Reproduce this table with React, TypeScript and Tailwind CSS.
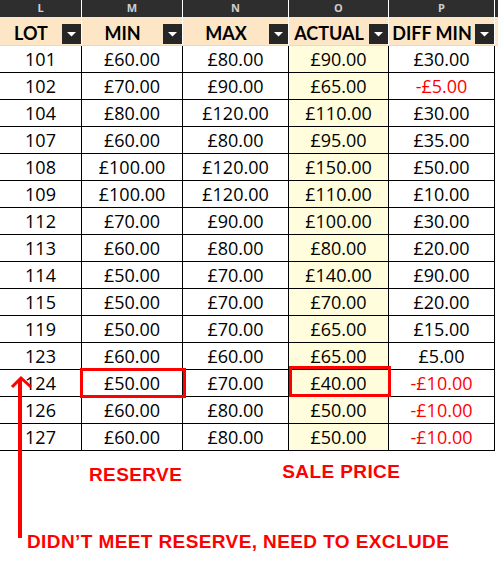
import React from "react";

const rows: [string, string, string, string, string][] = [
  ["101", "£60.00", "£80.00", "£90.00", "£30.00"],
  ["102", "£70.00", "£90.00", "£65.00", "-£5.00"],
  ["104", "£80.00", "£120.00", "£110.00", "£30.00"],
  ["107", "£60.00", "£80.00", "£95.00", "£35.00"],
  ["108", "£100.00", "£120.00", "£150.00", "£50.00"],
  ["109", "£100.00", "£120.00", "£110.00", "£10.00"],
  ["112", "£70.00", "£90.00", "£100.00", "£30.00"],
  ["113", "£60.00", "£80.00", "£80.00", "£20.00"],
  ["114", "£50.00", "£70.00", "£140.00", "£90.00"],
  ["115", "£50.00", "£70.00", "£70.00", "£20.00"],
  ["119", "£50.00", "£70.00", "£65.00", "£15.00"],
  ["123", "£60.00", "£60.00", "£65.00", "£5.00"],
  ["124", "£50.00", "£70.00", "£40.00", "-£10.00"],
  ["126", "£60.00", "£80.00", "£50.00", "-£10.00"],
  ["127", "£60.00", "£80.00", "£50.00", "-£10.00"],
];

const widths = ["w-[82px]", "w-[101px]", "w-[106px]", "w-[100px]", "w-[106px]"];

function FilterButton() {
  return (
    <div className="w-[19px] h-[20px] bg-[#262626] flex items-center justify-center shrink-0">
      <svg width="9" height="5" viewBox="0 0 9 5">
        <polygon points="0,0 9,0 4.5,4.5" fill="#ffffff" />
      </svg>
    </div>
  );
}

function HeaderCell({ label, w }: { label: string; w: string }) {
  return (
    <div className={`${w} h-full border-r border-white flex items-end pb-[1px]`}>
      <div
        className="flex-1 h-full flex items-center justify-center pt-[5px] font-bold text-[18px] text-black"
        style={{ fontFamily: "Lato, 'Open Sans', sans-serif" }}
      >
        {label}
      </div>
      <FilterButton />
    </div>
  );
}

export default function App() {
  const letters = ["L", "M", "N", "O", "P"];
  const headers = ["LOT", "MIN", "MAX", "ACTUAL", "DIFF MIN"];
  return (
    <div
      className="relative w-[498px] h-[563px] bg-white overflow-hidden"
      style={{ fontFamily: "'Open Sans', 'Noto Sans', sans-serif" }}
    >
      {/* column letters */}
      <div className="flex h-[17px] bg-[#2e2e2e]">
        {letters.map((l, i) => (
          <div
            key={l}
            className={`${widths[i]} h-full border-r border-white flex items-center justify-center text-[11px] font-bold text-[#cfcfcf]`}
          >
            {l}
          </div>
        ))}
        <div className="flex-1" />
      </div>
      {/* header */}
      <div className="flex h-[29px] bg-[#fde6c6] border-b border-[#dcdcdc]">
        {headers.map((h, i) => (
          <HeaderCell key={h} label={h} w={widths[i]} />
        ))}
        <div className="flex-1" />
      </div>
      {/* data */}
      {rows.map((r) => (
        <div key={r[0]} className="flex h-[27px]">
          {r.map((v, i) => (
            <div
              key={i}
              className={`${widths[i]} h-full border-r border-b border-black flex items-center justify-center pt-[1px] text-[18px] ${
                i === 3 ? "bg-[#fffddb]" : ""
              } ${i === 4 && v.startsWith("-") ? "text-[#ff0000]" : "text-black"}`}
            >
              {v}
            </div>
          ))}
          <div className="flex-1" />
        </div>
      ))}

      {/* annotations */}
      <div
        className="text-[19px] leading-[19px] font-bold tracking-[0.4px] text-[#ff0000]"
        style={{ fontFamily: "'Liberation Sans', Arial, sans-serif" }}
      >
        <div className="flex items-start pt-[11px]">
          <div className="ml-[89px] mt-[3px]">RESERVE</div>
          <div className="ml-[100px]">SALE PRICE</div>
        </div>
        <div className="ml-[27px] mt-[48px]">DIDN’T MEET RESERVE, NEED TO EXCLUDE</div>
      </div>

      {/* red boxes */}
      <div className="absolute left-[80px] top-[368px] w-[106px] h-[30px] border-[3px] border-[#ff0000]" />
      <div className="absolute left-[289px] top-[366px] w-[102px] h-[31px] border-[3px] border-[#ff0000]" />

      {/* arrow */}
      <svg className="absolute left-0 top-0" width="498" height="563" viewBox="0 0 498 563">
        <line x1="20" y1="380" x2="20" y2="538" stroke="#ff0000" strokeWidth="4" />
        <polyline points="12,387 21,378 31,387" fill="none" stroke="#ff0000" strokeWidth="3" />
      </svg>
    </div>
  );
}
